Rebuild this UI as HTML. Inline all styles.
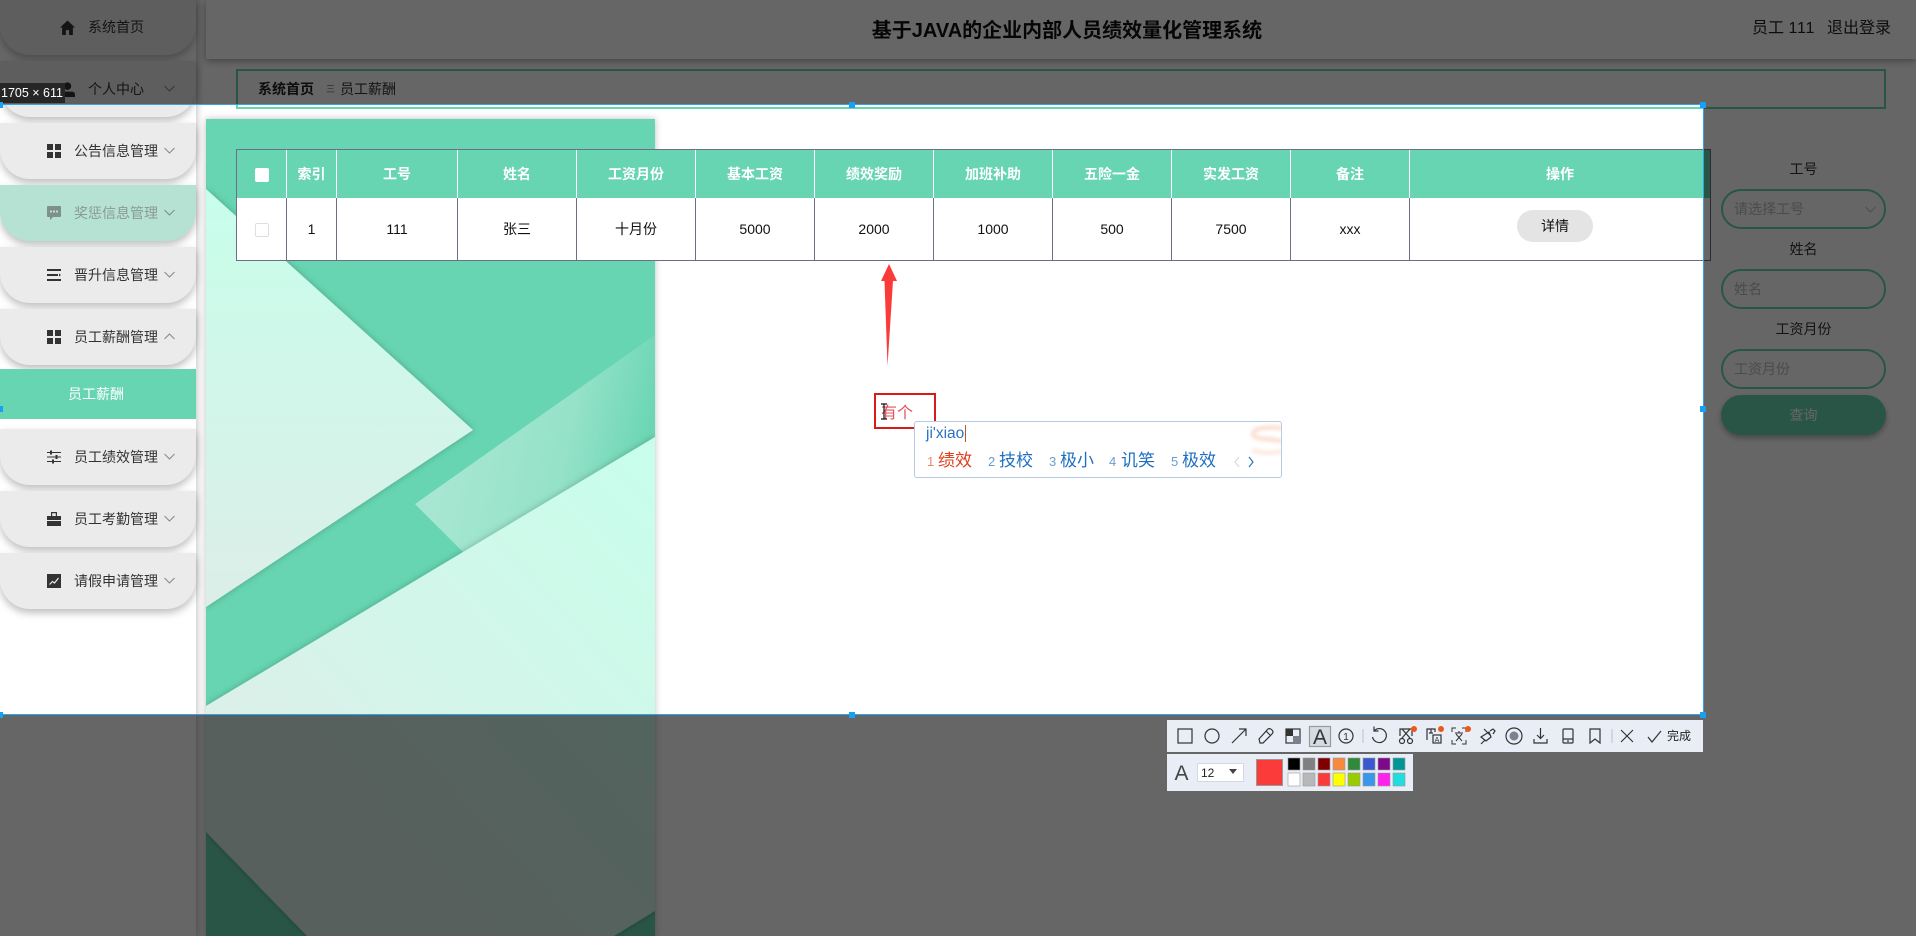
<!DOCTYPE html>
<html lang="zh">
<head>
<meta charset="utf-8">
<title>基于JAVA的企业内部人员绩效量化管理系统</title>
<style>
*{box-sizing:border-box;margin:0;padding:0}
html,body{width:1916px;height:936px;overflow:hidden;background:#fff;font-family:"Liberation Sans","Noto Sans CJK SC",sans-serif;color:#333}
.abs{position:absolute}
#side{position:absolute;left:0;top:0;width:196px;height:936px;background:#fff;box-shadow:1px 0 7px rgba(0,0,0,.25)}
.item{position:absolute;left:0;width:196px;height:56px;background:#ebebeb;border-radius:0 0 30px 30px;box-shadow:0 4px 8px rgba(0,0,0,.25);font-size:14px;line-height:56px;color:#333}
.item.act{background:#b5e2d2;color:#8a9a94}
.item span{position:absolute;top:0;white-space:nowrap}
.item .ic{position:absolute;top:21px;left:47px;width:14px;height:14px;fill:#333}
.item.act .ic{fill:#7f8f89}
.item .ch{position:absolute;top:24px;left:164px;width:11px;height:7px;fill:none;stroke:#888;stroke-width:1}
.sub{position:absolute;left:0;top:369px;width:196px;height:50px;background:#67d5b1;color:#fff;font-size:14px;line-height:50px;text-align:center;padding-right:4px}
#hdr{position:absolute;left:206px;top:0;right:0;height:59px;background:#fff;box-shadow:0 2px 7px rgba(0,0,0,.35)}
#title{position:absolute;left:206px;width:1722px;top:16px;text-align:center;font-size:20px;font-weight:bold;line-height:30px;color:#111}
#user{position:absolute;left:1752px;top:17px;font-size:16px;line-height:24px;color:#222;white-space:pre}
#user em{font-style:normal;letter-spacing:.8px}
#crumb{position:absolute;left:236px;top:69px;width:1650px;height:40px;border:2px solid #67d5b1;font-size:14px;line-height:36px;color:#333}
#crumb b{position:absolute;left:20px;color:#222}
#crumb i{position:absolute;left:88px;font-style:normal;font-size:9px;color:#777}
#crumb span{position:absolute;left:102px}
#panel{position:absolute;left:206px;top:119px;width:449px;height:817px;box-shadow:0 0 7px rgba(0,0,0,.25)}
table{position:absolute;left:236px;top:149px;width:1475px;height:112px;border:1px solid #6d6d88;border-collapse:separate;border-spacing:0;table-layout:fixed;font-size:14px;text-align:center;background:#fff}
th{height:48px;background:#67d5b1;color:#fff;font-weight:bold;border-right:1px solid #fff;padding:0}
td{height:62px;color:#111;border-right:1px solid #6d6d88;padding:0;background:#fff}
th:last-child,td:last-child{border-right:none}
.cb{display:inline-block;width:14px;height:14px;border-radius:2px;background:#fff;vertical-align:middle}
td .cb{border:1px solid #dcdfe6}
.btn{display:inline-block;width:76px;height:32px;line-height:32px;border-radius:16px;background:#e4e4e4;color:#111;position:relative;left:-5px;top:-3px}
.lab{position:absolute;left:1721px;width:165px;text-align:center;font-size:14px;line-height:20px;color:#333}
.inp{position:absolute;left:1721px;width:165px;height:40px;border:2px solid #67d5b1;border-radius:20px;font-size:14px;line-height:36px;color:#bbb;background:#fff;padding-left:11px}
#qry{position:absolute;left:1721px;top:395px;width:165px;height:40px;border-radius:20px;background:#67d5b1;color:#fff;font-size:14px;line-height:40px;text-align:center;box-shadow:0 3px 6px rgba(0,0,0,.3)}
#sel{position:absolute;left:-1px;top:104px;width:1705px;height:611px;border:1.5px solid #2ba6e6;box-shadow:0 0 0 3000px rgba(0,0,0,.6)}
#badge{position:absolute;left:0;top:83px;width:65px;height:20px;background:#262626;color:#fff;font-size:12.5px;line-height:20px;white-space:nowrap;padding-left:1px;overflow:hidden}
.h{position:absolute;width:6px;height:6px;background:#1aa0f0}
#ime{position:absolute;left:914px;top:421px;width:368px;height:57px;background:#fff;border:1px solid #b4cbe2;border-radius:3px;overflow:hidden;color:#2a72c0}
#ime span{position:absolute;white-space:nowrap}
#ime .n{font-size:13px;top:30px;line-height:20px;color:#6a9ccf}
#ime .c{font-size:17px;top:26px;line-height:26px;color:#1f6fc0}
#tb1{position:absolute;left:1167px;top:720px;width:536px;height:32px;background:#e8edf6}
#tb2{position:absolute;left:1167px;top:754px;width:246px;height:37px;background:#e8edf6}
#ov{position:absolute;left:0;top:0;width:1916px;height:936px;pointer-events:none}
</style>
</head>
<body>

<div id="side">
  <div class="item" style="top:-1px"><svg class="ic" style="left:60px;width:15px;height:15px" viewBox="0 0 14 14"><path d="M7 .5L14 7h-2v7H8.500V9.500h-3V14H2V7H0z"/></svg><span style="left:88px">系统首页</span></div>
  <div class="item" style="top:61px"><svg class="ic" style="left:60px;width:15px;height:15px" viewBox="0 0 14 14"><circle cx="7" cy="3.800" r="3.500"/><path d="M0 14v-2.500Q0 9 4 9h6q4 0 4 2.500V14z"/></svg><span style="left:88px">个人中心</span><svg class="ch" viewBox="0 0 11 7"><path d="M.5 1l5 5 5-5"/></svg></div>
  <div class="item" style="top:123px"><svg class="ic" viewBox="0 0 14 14"><path d="M0 0h6v6H0zM8 0h6v6H8zM0 8h6v6H0zM8 8h6v6H8z"/></svg><span style="left:74px">公告信息管理</span><svg class="ch" viewBox="0 0 11 7"><path d="M.5 1l5 5 5-5"/></svg></div>
  <div class="item act" style="top:185px"><svg class="ic" viewBox="0 0 14 14"><path d="M1 0h12q1 0 1 1v9q0 1-1 1H6l-3 3v-3H1q-1 0-1-1V1q0-1 1-1z"/><path d="M3 4.500h2v2H3zM6 4.500h2v2H6zM9 4.500h2v2H9z" fill="#b5e2d2"/></svg><span style="left:74px">奖惩信息管理</span><svg class="ch" viewBox="0 0 11 7"><path d="M.5 1l5 5 5-5"/></svg></div>
  <div class="item" style="top:247px"><svg class="ic" viewBox="0 0 14 14"><path d="M0 1h14v2H0zM0 6h11V8H0zM12 5.500L14 7l-2 1.500zM0 11h14v2H0z"/></svg><span style="left:74px">晋升信息管理</span><svg class="ch" viewBox="0 0 11 7"><path d="M.5 1l5 5 5-5"/></svg></div>
  <div class="item" style="top:309px"><svg class="ic" viewBox="0 0 14 14"><path d="M0 0h6v6H0zM8 0h6v6H8zM0 8h6v6H0zM8 8h6v6H8z"/></svg><span style="left:74px">员工薪酬管理</span><svg class="ch" viewBox="0 0 11 7"><path d="M.5 6l5-5 5 5"/></svg></div>
  <div class="sub">员工薪酬</div>
  <div class="item" style="top:429px"><svg class="ic" viewBox="0 0 14 14"><path d="M0 2h14v1H0zM0 6.500h14v1H0zM0 11h14v1H0z"/><path d="M3 .5h2v4H3zM8.500 5h2v4h-2zM5 9.500h2v4H5z"/></svg><span style="left:74px">员工绩效管理</span><svg class="ch" viewBox="0 0 11 7"><path d="M.5 1l5 5 5-5"/></svg></div>
  <div class="item" style="top:491px"><svg class="ic" viewBox="0 0 14 14"><path d="M4 0h6v4H8.800V1.200H5.200V4H4zM0 4h14v4H0zM0 9h14v5H0z"/></svg><span style="left:74px">员工考勤管理</span><svg class="ch" viewBox="0 0 11 7"><path d="M.5 1l5 5 5-5"/></svg></div>
  <div class="item" style="top:553px"><svg class="ic" viewBox="0 0 14 14"><path d="M0 0h14v14H0z"/><path d="M2.500 10.500l3-3 2 1.500 4-5" fill="none" stroke="#ebebeb" stroke-width="1.200"/></svg><span style="left:74px">请假申请管理</span><svg class="ch" viewBox="0 0 11 7"><path d="M.5 1l5 5 5-5"/></svg></div>
</div>

<div id="panel">
<svg width="449" height="817" viewBox="206 119 449 817" style="display:block">
  <defs>
    <linearGradient id="g1" gradientUnits="userSpaceOnUse" x1="260" y1="190" x2="260" y2="607"><stop offset="0" stop-color="#c8feeb"/><stop offset="1" stop-color="#dceee8"/></linearGradient>
    <linearGradient id="g2" gradientUnits="userSpaceOnUse" x1="640" y1="450" x2="260" y2="800"><stop offset="0" stop-color="#c8feeb"/><stop offset="1" stop-color="#dcefe9"/></linearGradient>
    <linearGradient id="g3" gradientUnits="userSpaceOnUse" x1="450" y1="440" x2="640" y2="480"><stop offset="0" stop-color="#fff" stop-opacity=".42"/><stop offset=".6" stop-color="#fff" stop-opacity=".3"/><stop offset="1" stop-color="#fff" stop-opacity=".03"/></linearGradient>
    <filter id="s" x="-10%" y="-10%" width="120%" height="120%"><feDropShadow dx="0" dy="0" stdDeviation="3.500" flood-color="#000" flood-opacity=".25"/></filter>
  </defs>
  <rect x="206" y="119" width="449" height="817" fill="#67d5b1"/>
  <polygon points="206,189 473,430 206,607" fill="url(#g1)" filter="url(#s)"/>
  <polygon points="415,504 655,335 655,437 463,552" fill="url(#g3)"/>
  <polygon points="206,706 655,437 655,911 614,936 307,936 206,832" fill="url(#g2)" filter="url(#s)"/>
</svg>
</div>

<div id="hdr"></div>
<div id="title">基于JAVA的企业内部人员绩效量化管理系统</div>
<div id="user">员工 <em>111</em><span style="position:absolute;left:75px">退出登录</span></div>

<div id="crumb"><b>系统首页</b><i>三</i><span>员工薪酬</span></div>

<table>
  <colgroup><col style="width:50px"><col style="width:50px"><col style="width:121px"><col style="width:119px"><col style="width:119px"><col style="width:119px"><col style="width:119px"><col style="width:119px"><col style="width:119px"><col style="width:119px"><col style="width:119px"><col style="width:300px"></colgroup>
  <tr><th><i class="cb"></i></th><th>索引</th><th>工号</th><th>姓名</th><th>工资月份</th><th>基本工资</th><th>绩效奖励</th><th>加班补助</th><th>五险一金</th><th>实发工资</th><th>备注</th><th>操作</th></tr>
  <tr><td><i class="cb"></i></td><td>1</td><td>111</td><td>张三</td><td>十月份</td><td>5000</td><td>2000</td><td>1000</td><td>500</td><td>7500</td><td>xxx</td><td><span class="btn">详情</span></td></tr>
</table>

<div class="lab" style="top:159px">工号</div>
<div class="inp" style="top:189px">请选择工号<svg style="position:absolute;left:142px;top:15px" width="11" height="7" viewBox="0 0 11 7" fill="none" stroke="#c0c4cc"><path d="M.5 1l5 5 5-5"/></svg></div>
<div class="lab" style="top:239px">姓名</div>
<div class="inp" style="top:269px">姓名</div>
<div class="lab" style="top:319px">工资月份</div>
<div class="inp" style="top:349px">工资月份</div>
<div id="qry">查询</div>

<div id="sel"></div>
<div id="badge">1705 × 611</div>
<i class="h" style="left:-3px;top:102px"></i><i class="h" style="left:849px;top:102px"></i><i class="h" style="left:1700px;top:102px"></i>
<i class="h" style="left:-3px;top:406px"></i><i class="h" style="left:1700px;top:406px"></i>
<i class="h" style="left:-3px;top:712px"></i><i class="h" style="left:849px;top:712px"></i><i class="h" style="left:1700px;top:712px"></i>

<div id="tb1"></div>
<div id="tb2"></div>

<svg id="ov" viewBox="0 0 1916 936">
  <!-- annotations -->
  <polygon points="889,264 897,281 893,281 887.500,366 884.500,281 881,281" fill="#fb3a3a"/>
  <rect x="875" y="394" width="60" height="34" fill="#fff" stroke="#d91a1a" stroke-width="2"/>
  <text x="881" y="418" font-size="16" fill="#e5505a" font-family="'Liberation Sans','Noto Sans CJK SC',sans-serif">有个</text>
  <path d="M881 404h6M881 419h6M884 404v15" stroke="#111" stroke-width="1.200" fill="none"/>

  <!-- toolbar 1 icons -->
  <g fill="none" stroke="#333" stroke-width="1.200" font-family="'Liberation Sans','Noto Sans CJK SC',sans-serif">
    <rect x="1178" y="729" width="14" height="14"/>
    <circle cx="1212" cy="736" r="7"/>
    <path d="M1232 743l14-14M1239 729h7v7"/>
    <path d="M1260 743l-1-4 9-10q2-1 4 1t0 4l-9 9zM1266 731l4 4"/>
    <rect x="1286" y="729" width="14" height="14"/>
    <rect x="1286" y="729" width="7" height="7" fill="#333" stroke="none"/>
    <rect x="1293" y="736" width="7" height="7" fill="#7a8290" stroke="none"/>
    <rect x="1309.500" y="726.500" width="21" height="20" fill="#d6dae3" stroke="#999"/>
    <text x="1320" y="744" font-size="21" text-anchor="middle" fill="#333" stroke="none">A</text>
    <circle cx="1346" cy="736" r="7"/>
    <text x="1346" y="740" font-size="10" text-anchor="middle" fill="#333" stroke="none">1</text>
    <path d="M1363 729v14" stroke="#c4c8d0"/>
    <path d="M1374.500 730.500a7 7 0 1 1-2 6.500M1374 726.500v4.500h4.500"/>
    <path d="M1400 736v-7h12v7M1402 729l8 9M1410 729l-8 9"/>
    <circle cx="1402" cy="741" r="2.500"/><circle cx="1410" cy="741" r="2.500"/>
    <path d="M1427 740v-11h8v3M1429 733h4M1431 729v4"/>
    <rect x="1433" y="735" width="8" height="8"/>
    <text x="1437" y="742" font-size="7" text-anchor="middle" fill="#333" stroke="none">A</text>
    <path d="M1452 732v-4h4M1462 728h4v4M1466 740v4h-4M1456 744h-4v-4M1455 733h8M1459 731v2M1456 734l6 7M1462 734l-6 7" stroke-width="1"/>
    <path d="M1484 729l7 7M1481 737l8-5 2 5-5 4zM1485 740l-4 4M1490 731l3-2 2 2-2 3"/>
    <circle cx="1514" cy="736" r="8"/>
    <circle cx="1514" cy="736" r="4.500" fill="#7a8290" stroke="none"/>
    <path d="M1540.500 728v10M1537 735l3.500 3.500 3.500-3.500M1534 739v4h13v-4"/>
    <rect x="1563" y="729" width="10" height="14" rx="1"/>
    <path d="M1563 739h10M1567 741h2"/>
    <path d="M1590 729h10v14l-5-4-5 4z"/>
    <path d="M1612 729v14" stroke="#c4c8d0"/>
    <path d="M1621 730l12 12M1633 730l-12 12"/>
    <path d="M1648 737l4 5 9-11"/>
    <text x="1667" y="740" font-size="12" fill="#222" stroke="none">完成</text>
  </g>
  <circle cx="1414" cy="729" r="3" fill="#e9591c"/>
  <circle cx="1441" cy="729" r="3" fill="#e9591c"/>
  <circle cx="1468" cy="729" r="3" fill="#e9591c"/>

  <!-- toolbar 2 -->
  <text x="1181.500" y="780" font-size="21" text-anchor="middle" fill="#444" font-family="'Liberation Sans',sans-serif">A</text>
  <rect x="1197.500" y="763.500" width="46" height="18" fill="#fff" stroke="#d4d8e0"/>
  <text x="1201" y="777" font-size="12" fill="#222" font-family="'Liberation Sans',sans-serif">12</text>
  <polygon points="1229,769 1237,769 1233,774" fill="#444"/>
  <rect x="1256.500" y="759.500" width="26" height="26" fill="#fb3a3a" stroke="#999" stroke-width="1"/>
  <g stroke="#999" stroke-width=".6">
    <rect x="1288" y="758" width="12" height="12" fill="#000"/>
    <rect x="1303" y="758" width="12" height="12" fill="#808080"/>
    <rect x="1318" y="758" width="12" height="12" fill="#800000"/>
    <rect x="1333" y="758" width="12" height="12" fill="#f88a3c"/>
    <rect x="1348" y="758" width="12" height="12" fill="#318a39"/>
    <rect x="1363" y="758" width="12" height="12" fill="#3a58d0"/>
    <rect x="1378" y="758" width="12" height="12" fill="#7e0a8a"/>
    <rect x="1393" y="758" width="12" height="12" fill="#009696"/>
    <rect x="1288" y="773" width="12" height="13" fill="#fff"/>
    <rect x="1303" y="773" width="12" height="13" fill="#b8b8b8"/>
    <rect x="1318" y="773" width="12" height="13" fill="#fb3a3a"/>
    <rect x="1333" y="773" width="12" height="13" fill="#ffff00"/>
    <rect x="1348" y="773" width="12" height="13" fill="#99cc00"/>
    <rect x="1363" y="773" width="12" height="13" fill="#3a96e8"/>
    <rect x="1378" y="773" width="12" height="13" fill="#ff22ee"/>
    <rect x="1393" y="773" width="12" height="13" fill="#22dde0"/>
  </g>
</svg>

<div id="ime">
  <svg style="position:absolute;left:329px;top:0;filter:blur(1.500px);opacity:.65" width="38" height="36" viewBox="0 0 38 36" fill="none" stroke="#f9d3bf" stroke-width="5"><path d="M38 6Q14 4 10 10t12 7 16 4"/><path d="M8 28q14 5 30 1" stroke="#fbe3d6"/></svg>
  <span style="left:11px;top:2px;font-size:15.500px;line-height:20px;color:#2a72c0">ji'xiao</span>
  <span style="left:50px;top:3px;width:1px;height:17px;background:#c4502a"></span>
  <span class="n" style="left:12px;color:#ea8a72">1</span><span class="c" style="left:23px;color:#e0401a">绩效</span>
  <span class="n" style="left:73px">2</span><span class="c" style="left:84px">技校</span>
  <span class="n" style="left:134px">3</span><span class="c" style="left:145px">极小</span>
  <span class="n" style="left:194px">4</span><span class="c" style="left:206px">讥笑</span>
  <span class="n" style="left:256px">5</span><span class="c" style="left:267px">极效</span>
  <svg style="position:absolute;left:319px;top:34px" width="22" height="12" viewBox="0 0 22 12" fill="none"><path d="M5 1L1 6l4 5" stroke="#d5dce5" stroke-width="1.200"/><path d="M15 1l4 5-4 5" stroke="#2a72c0" stroke-width="1.200"/></svg>
</div>

</body>
</html>
